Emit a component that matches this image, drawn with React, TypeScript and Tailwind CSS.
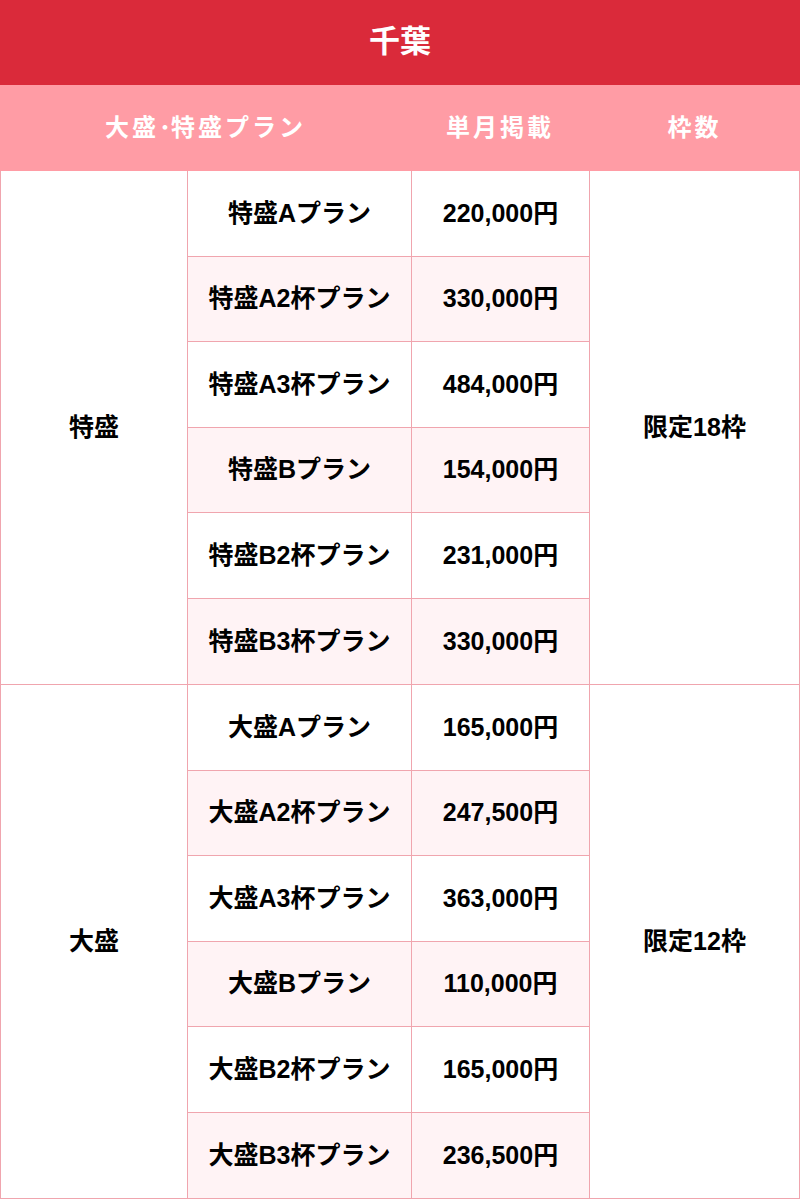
import React from "react";

type Plan = { name: string; price: string };

const groups: { label: string; limit: string; plans: Plan[] }[] = [
  {
    label: "特盛",
    limit: "限定18枠",
    plans: [
      { name: "特盛Aプラン", price: "220,000円" },
      { name: "特盛A2杯プラン", price: "330,000円" },
      { name: "特盛A3杯プラン", price: "484,000円" },
      { name: "特盛Bプラン", price: "154,000円" },
      { name: "特盛B2杯プラン", price: "231,000円" },
      { name: "特盛B3杯プラン", price: "330,000円" },
    ],
  },
  {
    label: "大盛",
    limit: "限定12枠",
    plans: [
      { name: "大盛Aプラン", price: "165,000円" },
      { name: "大盛A2杯プラン", price: "247,500円" },
      { name: "大盛A3杯プラン", price: "363,000円" },
      { name: "大盛Bプラン", price: "110,000円" },
      { name: "大盛B2杯プラン", price: "165,000円" },
      { name: "大盛B3杯プラン", price: "236,500円" },
    ],
  },
];

export default function App() {
  return (
    <div
      className="w-[800px] bg-white font-bold"
      style={{ fontFamily: '"Liberation Sans", "Noto Sans CJK JP", sans-serif' }}
    >
      {/* title */}
      <div className="h-[85px] bg-[#da2a3a] flex items-center justify-center text-white text-[31px]">
        千葉
      </div>

      {/* column header */}
      <div className="h-[86px] bg-[#ff9ca5] grid grid-cols-[411px_178px_1fr] items-center text-white text-[24px] tracking-[3px]">
        <div className="text-center">
          大盛<span className="tracking-normal">･</span>特盛プラン
        </div>
        <div className="text-center">単月掲載</div>
        <div className="text-center">枠数</div>
      </div>

      {/* body */}
      <div className="border-l border-r border-[#f0a5ae]">
        {groups.map((g) => (
          <div
            key={g.label}
            className="grid grid-cols-[187px_224px_178px_1fr] border-b border-[#f0a5ae] text-[25px] text-black"
          >
            <div className="flex items-center justify-center border-r border-[#f0a5ae]">
              {g.label}
            </div>
            <div className="col-span-2 border-r border-[#f0a5ae]">
              {g.plans.map((p, i) => (
                <div
                  key={p.name}
                  className={`grid grid-cols-[224px_1fr] h-[85.5px] ${
                    i < g.plans.length - 1 ? "border-b border-[#f0a5ae]" : ""
                  } ${i % 2 === 1 ? "bg-[#fff3f5]" : "bg-white"}`}
                >
                  <div className="flex items-center justify-center border-r border-[#f0a5ae]">
                    {p.name}
                  </div>
                  <div className="flex items-center justify-center">{p.price}</div>
                </div>
              ))}
            </div>
            <div className="flex items-center justify-center">{g.limit}</div>
          </div>
        ))}
      </div>
    </div>
  );
}
